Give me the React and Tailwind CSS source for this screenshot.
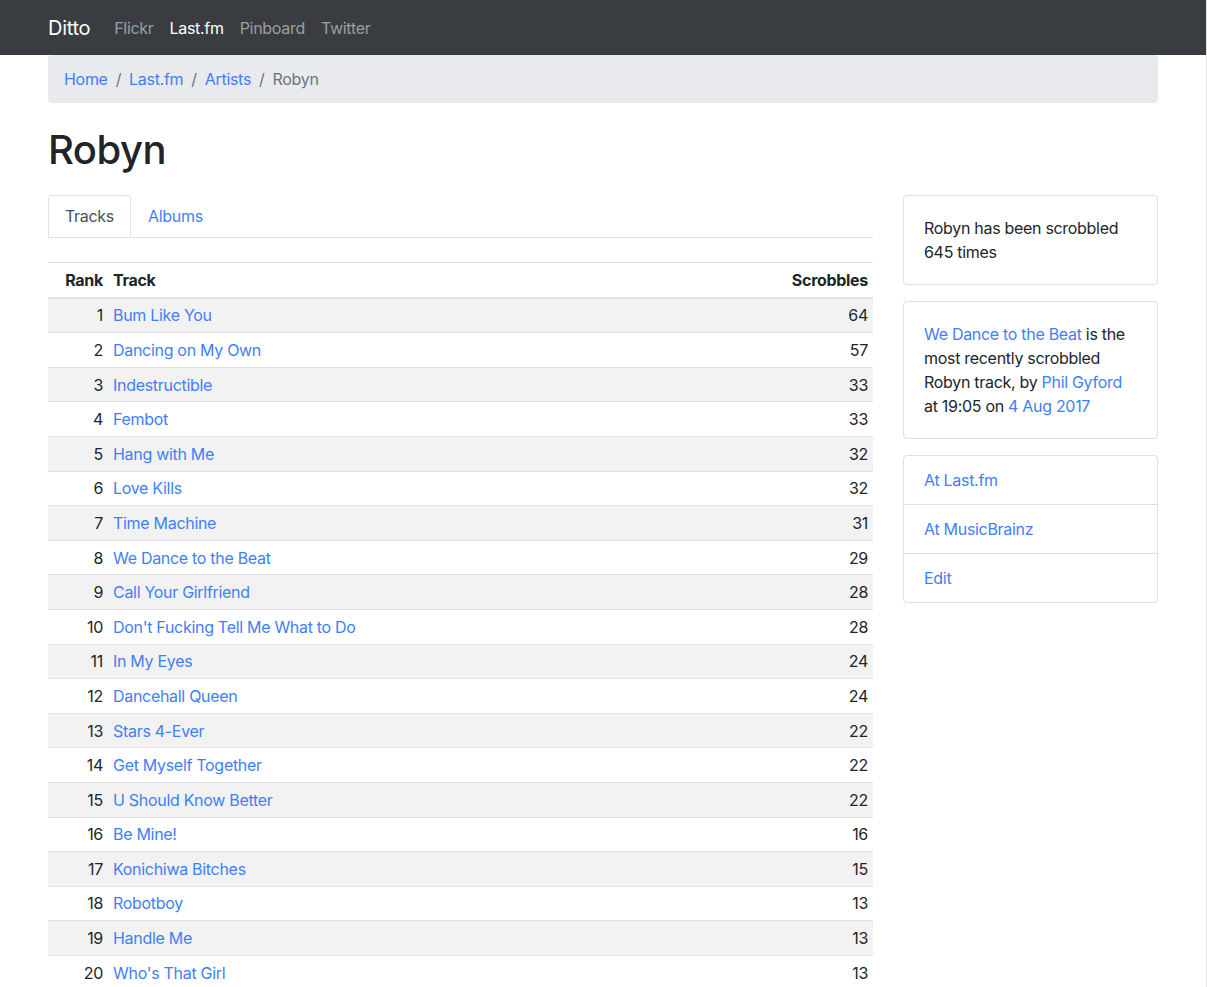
import React from 'react';

const tracks = [
  ['Bum Like You', 64],
  ['Dancing on My Own', 57],
  ['Indestructible', 33],
  ['Fembot', 33],
  ['Hang with Me', 32],
  ['Love Kills', 32],
  ['Time Machine', 31],
  ['We Dance to the Beat', 29],
  ['Call Your Girlfriend', 28],
  ["Don't Fucking Tell Me What to Do", 28],
  ['In My Eyes', 24],
  ['Dancehall Queen', 24],
  ['Stars 4-Ever', 22],
  ['Get Myself Together', 22],
  ['U Should Know Better', 22],
  ['Be Mine!', 16],
  ['Konichiwa Bitches', 15],
  ['Robotboy', 13],
  ['Handle Me', 13],
  ["Who's That Girl", 13],
];

const navLinks = ['Flickr', 'Last.fm', 'Pinboard', 'Twitter'];

const Crumb = ({ children, first, active }) => (
  <li className="flex">
    {!first && <span className="px-2 text-[#6c757d]">/</span>}
    {active ? (
      <span className="text-[#6c757d]">{children}</span>
    ) : (
      <a href="#" className="text-[#3f80f8]">{children}</a>
    )}
  </li>
);

const Card = ({ children }) => (
  <div className="border border-[#dfdfdf] rounded bg-white">{children}</div>
);

export default function App() {
  return (
    <div
      className="h-screen overflow-hidden bg-white text-[#212529] text-base leading-6 tracking-[-0.3px] border-r border-[#e3e3e3]"
      style={{ fontFamily: 'Inter, "Noto Sans", sans-serif' }}
    >
      {/* navbar */}
      <nav className="bg-[#393c40] h-[55px]">
        <div className="w-[1110px] mx-auto h-full flex items-center">
          <a href="#" className="text-white text-xl leading-[30px] mr-4">Ditto</a>
          <ul className="flex">
            {navLinks.map((l) => (
              <li key={l}>
                <a
                  href="#"
                  className={`px-2 ${l === 'Last.fm' ? 'text-white' : 'text-white/50'}`}
                >
                  {l}
                </a>
              </li>
            ))}
          </ul>
        </div>
      </nav>

      <div className="w-[1110px] mx-auto">
        {/* breadcrumb */}
        <ol className="flex bg-[#e9eaed] rounded px-4 py-3 mb-4">
          <Crumb first>Home</Crumb>
          <Crumb>Last.fm</Crumb>
          <Crumb>Artists</Crumb>
          <Crumb active>Robyn</Crumb>
        </ol>

        <h1 className="text-[40px] leading-[48px] font-medium mt-[23px] mb-[21px] tracking-[-0.5px]">Robyn</h1>

        <div className="flex gap-[30px]">
          {/* main column */}
          <div className="w-[825px]">
            <ul className="flex border-b border-[#dee2e6]">
              <li className="-mb-px">
                <a href="#" className="block px-4 py-2 text-[#495057] bg-white border border-[#dee2e6] border-b-white rounded-t">
                  Tracks
                </a>
              </li>
              <li>
                <a href="#" className="block px-4 py-2 text-[#3f80f8] border border-transparent">
                  Albums
                </a>
              </li>
            </ul>

            <table className="w-full mt-6 border-collapse">
              <thead>
                <tr className="border-t border-[#dee2e6] border-b-2">
                  <th className="w-[60px] text-right px-[5px] py-[4.8px] font-bold">Rank</th>
                  <th className="text-left px-[5px] py-[4.8px] font-bold">Track</th>
                  <th className="text-right px-[5px] py-[4.8px] font-bold">Scrobbles</th>
                </tr>
              </thead>
              <tbody>
                {tracks.map(([name, count], i) => (
                  <tr
                    key={name}
                    className={`border-t border-[#dee2e6] ${i % 2 === 0 ? 'bg-[#f2f2f2]' : ''}`}
                  >
                    <td className="text-right px-[5px] py-[4.8px]">{i + 1}</td>
                    <td className="px-[5px] py-[4.8px]">
                      <a href="#" className="text-[#3f80f8]">{name}</a>
                    </td>
                    <td className="text-right px-[5px] py-[4.8px]">{count}</td>
                  </tr>
                ))}
              </tbody>
            </table>
          </div>

          {/* sidebar */}
          <aside className="w-[255px] flex flex-col gap-4">
            <Card>
              <p className="p-5">Robyn has been scrobbled 645 times</p>
            </Card>
            <Card>
              <p className="p-5">
                <a href="#" className="text-[#3f80f8]">We Dance to the Beat</a> is the most
                recently scrobbled Robyn track, by{' '}
                <a href="#" className="text-[#3f80f8]">Phil Gyford</a> at 19:05 on{' '}
                <a href="#" className="text-[#3f80f8]">4 Aug 2017</a>
              </p>
            </Card>
            <Card>
              <ul className="divide-y divide-[#dfdfdf]">
                {['At Last.fm', 'At MusicBrainz', 'Edit'].map((t) => (
                  <li key={t} className="px-5 py-3">
                    <a href="#" className="text-[#3f80f8]">{t}</a>
                  </li>
                ))}
              </ul>
            </Card>
          </aside>
        </div>
      </div>
    </div>
  );
}
